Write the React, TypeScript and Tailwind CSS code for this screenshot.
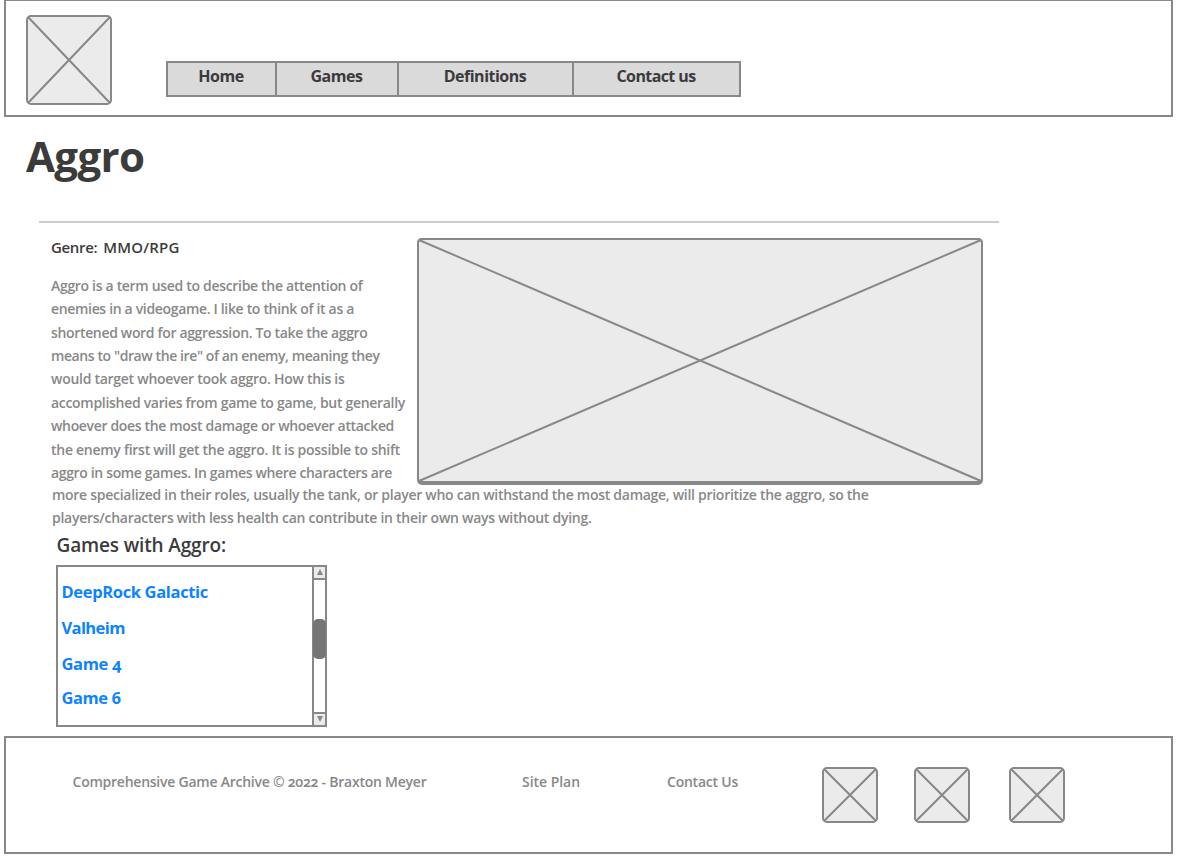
type BoxProps = { width: number; height: number; className?: string };

// Image placeholder: rounded frame crossed by its two diagonals.
function Placeholder({ width, height, className = "" }: BoxProps) {
  return (
    <svg width={width} height={height} className={`block shrink-0 ${className}`} fill="none" stroke="#888888" strokeWidth="2">
      <rect x="1" y="1" width={width - 2} height={height - 2} rx="4" fill="#ebebeb" />
      <path d={`M2 2L${width - 2} ${height - 2}M${width - 2} 2L2 ${height - 2}`} />
    </svg>
  );
}

const nav = [
  { label: "Home", box: "w-[109px] border-r-2", text: "tracking-[-0.453px]" },
  { label: "Games", box: "w-[122px] border-r-2", text: "tracking-[-0.475px]" },
  { label: "Definitions", box: "w-[175px] border-r-2", text: "tracking-[-0.497px]" },
  { label: "Contact us", box: "w-[165px]", text: "tracking-[-0.603px]" },
];

const intro = [
  { text: "Aggro is a term used to describe the attention of", cls: "tracking-[-0.315px]" },
  { text: "enemies in a videogame. I like to think of it as a", cls: "tracking-[-0.331px]" },
  { text: "shortened word for aggression. To take the aggro", cls: "tracking-[-0.341px]" },
  { text: 'means to "draw the ire" of an enemy, meaning they', cls: "tracking-[-0.405px]" },
  { text: "would target whoever took aggro. How this is", cls: "tracking-[-0.274px]" },
  { text: "accomplished varies from game to game, but generally", cls: "tracking-[-0.303px]" },
  { text: "whoever does the most damage or whoever attacked", cls: "tracking-[-0.337px]" },
  { text: "the enemy first will get the aggro. It is possible to shift", cls: "tracking-[-0.273px]" },
  { text: "aggro in some games. In games where characters are", cls: "tracking-[-0.348px]" },
];

const games = [
  { name: "DeepRock Galactic", cls: "tracking-[-0.35px] mb-3" },
  { name: "Valheim", cls: "tracking-[-0.62px] mb-3" },
  { name: "Game 4", cls: "tracking-[-0.34px] mb-[10px]" },
  { name: "Game 6", cls: "tracking-[-0.42px]" },
];

function Scrollbar() {
  return (
    <div className="flex w-[13px] flex-col border-l-2 border-[#888888]">
      <div className="flex h-[13px] items-center justify-center border-b-2 border-[#888888] bg-[#ebebeb]">
        <svg width="6" height="6" className="block"><path d="M3 0L6 6H0Z" fill="#888888" /></svg>
      </div>
      <div className="flex-1 pt-[39px]">
        <div className="-mx-px h-10 rounded-[5px] bg-[#757575]" />
      </div>
      <div className="flex h-[13px] items-center justify-center border-t-2 border-[#888888] bg-[#ebebeb]">
        <svg width="6" height="6" className="block"><path d="M0 0H6L3 6Z" fill="#888888" /></svg>
      </div>
    </div>
  );
}

export default function App() {
  return (
    <div className="h-[858px] w-[1177px] overflow-hidden bg-white pl-1 font-['Open_Sans','Noto_Sans',sans-serif] font-semibold whitespace-nowrap oldstyle-nums">
      <header className="flex h-[117px] w-[1169px] border-2 border-t border-[#888888]">
        <Placeholder width={86} height={90} className="mt-[14px] ml-5" />
        <nav className="mt-[60px] ml-[54px] flex h-9 w-[575px] border-2 border-[#888888] bg-[#dadada] text-base leading-6 font-bold text-[#3b3b3b]">
          {nav.map((n) => (
            <a key={n.label} className={`border-[#888888] pt-px pr-px text-center ${n.box} ${n.text}`}>{n.label}</a>
          ))}
        </nav>
      </header>

      <main>
        <h1 className="mt-[11px] ml-[22px] text-[42px] leading-[56px] font-bold tracking-[-0.603px] text-[#3b3b3b]">Aggro</h1>
        <div className="mt-[37px] ml-[35px] h-[2px] w-[960px] bg-[#cccccc]" />
        <section className="flex h-[260px]">
          <div className="w-[366px] shrink-0 pl-[47px]">
            <p className="mt-3 flex gap-[6px] text-[15px] leading-6 text-[#3b3b3b]">
              <span className="tracking-[-0.35px]">Genre:</span>
              <span className="tracking-[0.2px]">MMO/RPG</span>
            </p>
            <div className="mt-[14.6px] text-sm leading-[23.45px] text-[#888888]">
              {intro.map((l) => (
                <p key={l.text} className={l.cls}>{l.text}</p>
              ))}
            </div>
          </div>
          <div className="mt-[15px] ml-[47px] h-[247px] w-[566px] shrink-0 rounded-[5px] bg-[#888888]">
            <Placeholder width={566} height={245} />
          </div>
        </section>
        <div className="pl-12 text-sm leading-[23.45px] text-[#888888]">
          <p className="tracking-[-0.281px]">more specialized in their roles, usually the tank, or player who can withstand the most damage, will prioritize the aggro, so the</p>
          <p className="tracking-[-0.262px]">players/characters with less health can contribute in their own ways without dying.</p>
        </div>

        <h2 className="mt-px ml-[52.5px] text-[19px] leading-7 tracking-[-0.148px] text-[#3b3b3b]">Games with Aggro:</h2>
        <div className="mt-[6px] ml-[52px] flex h-[162px] w-[271px] border-2 border-[#888888]">
          <ul className="flex-1 pt-[13px] pl-[3.5px] text-[16.5px] leading-6 font-bold text-[#0d83ff]">
            {games.map((g) => (
              <li key={g.name} className={g.cls}>{g.name}</li>
            ))}
          </ul>
          <Scrollbar />
        </div>
      </main>

      <footer className="mt-[9px] flex h-[118px] w-[1169px] border-2 border-[#888888] text-sm leading-6 text-[#888888]">
        <p className="mt-8 ml-[66.5px] w-[449.5px] tracking-[-0.24px]">Comprehensive Game Archive © 2022 - Braxton Meyer</p>
        <a className="mt-8 w-[145px] tracking-[-0.042px]">Site Plan</a>
        <a className="mt-8 w-[155px] tracking-[-0.231px]">Contact Us</a>
        <Placeholder width={56} height={56} className="mt-[29px]" />
        <Placeholder width={56} height={56} className="mt-[29px] ml-9" />
        <Placeholder width={56} height={56} className="mt-[29px] ml-[39px]" />
      </footer>
    </div>
  );
}
